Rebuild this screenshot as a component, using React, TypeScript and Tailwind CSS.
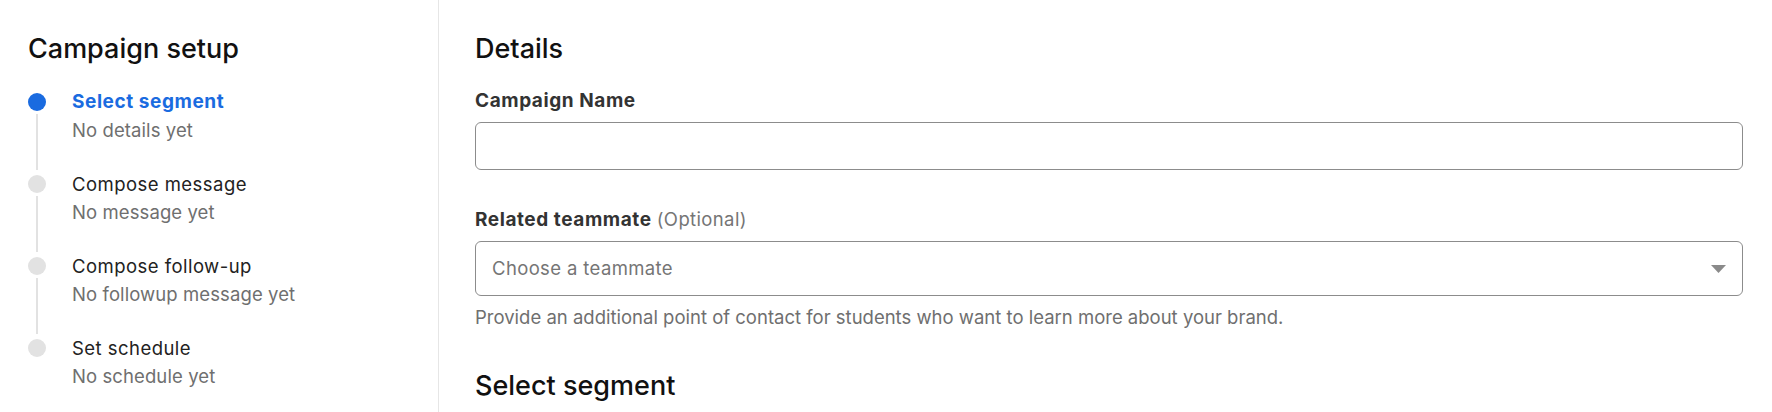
const steps = [
  { title: "Select segment", subtitle: "No details yet", active: true },
  { title: "Compose message", subtitle: "No message yet", active: false },
  { title: "Compose follow-up", subtitle: "No followup message yet", active: false },
  { title: "Set schedule", subtitle: "No schedule yet", active: false },
];

export default function App() {
  return (
    <div className="flex h-[412px] w-full overflow-hidden bg-white font-['Inter',sans-serif] text-[#222]">
      {/* Sidebar */}
      <aside className="w-[439px] shrink-0 border-r border-[#e6e6e6] pl-[28px] pt-[33px]">
        <h2 className="text-[27px] leading-[32px] font-medium text-[#111]">
          Campaign setup
        </h2>
        <ol className="mt-[23px]">
          {steps.map((step, i) => (
            <li key={step.title} className="flex">
              <div className="flex w-[44px] shrink-0 flex-col items-start">
                <span
                  className={
                    step.active
                      ? "mt-[5px] h-[18px] w-[18px] rounded-full bg-[#1a6be0]"
                      : "mt-[5px] h-[18px] w-[18px] rounded-full bg-[#e2e2e2]"
                  }
                />
                {i < steps.length - 1 && (
                  <span className="ml-[8px] mt-[3px] w-[2px] flex-1 bg-[#e2e2e2]" />
                )}
              </div>
              <div className={i < steps.length - 1 ? "pb-[26px]" : ""}>
                <p
                  className={
                    step.active
                      ? "text-[19px] leading-[28px] font-bold tracking-[0.03em] text-[#1a6be0]"
                      : "text-[18.5px] leading-[28px] tracking-[0.025em] text-[#222]"
                  }
                >
                  {step.title}
                </p>
                <p className="text-[18.5px] leading-[28px] tracking-[0.005em] text-[#6f6f6f]">
                  {step.subtitle}
                </p>
              </div>
            </li>
          ))}
        </ol>
      </aside>

      {/* Main form */}
      <main className="flex-1 pl-[36px] pr-[29px] pt-[33px]">
        <h2 className="text-[27px] leading-[32px] font-medium text-[#111]">
          Details
        </h2>

        <label className="mt-[22px] block text-[19px] leading-[28px] font-bold tracking-[0.03em] text-[#333]">
          Campaign Name
        </label>
        <input
          type="text"
          className="mt-[7px] block h-[48px] w-full rounded-[6px] border border-[#8c8c8c] px-[16px] text-[18.5px] outline-none"
        />

        <label className="mt-[35px] block text-[18.5px] leading-[28px] text-[#333]">
          <span className="text-[19px] font-bold tracking-[0.03em]">Related teammate</span>{" "}
          <span className="tracking-[0.02em] text-[#757575]">(Optional)</span>
        </label>
        <div className="mt-[7px] flex h-[55px] w-full items-center justify-between rounded-[6px] border border-[#8c8c8c] pl-[16px] pr-[16px]">
          <span className="text-[18.5px] tracking-[0.02em] text-[#757575]">Choose a teammate</span>
          <svg width="15" height="8" viewBox="0 0 15 8" className="text-[#8a8a8a]">
            <path d="M0 0h15L7.5 8z" fill="currentColor" />
          </svg>
        </div>
        <p className="mt-[8px] text-[18.5px] leading-[26px] text-[#6f6f6f]">
          Provide an additional point of contact for students who want to learn more about your brand.
        </p>

        <h2 className="mt-[40px] text-[27px] leading-[32px] font-medium text-[#111]">
          Select segment
        </h2>
      </main>
    </div>
  );
}
